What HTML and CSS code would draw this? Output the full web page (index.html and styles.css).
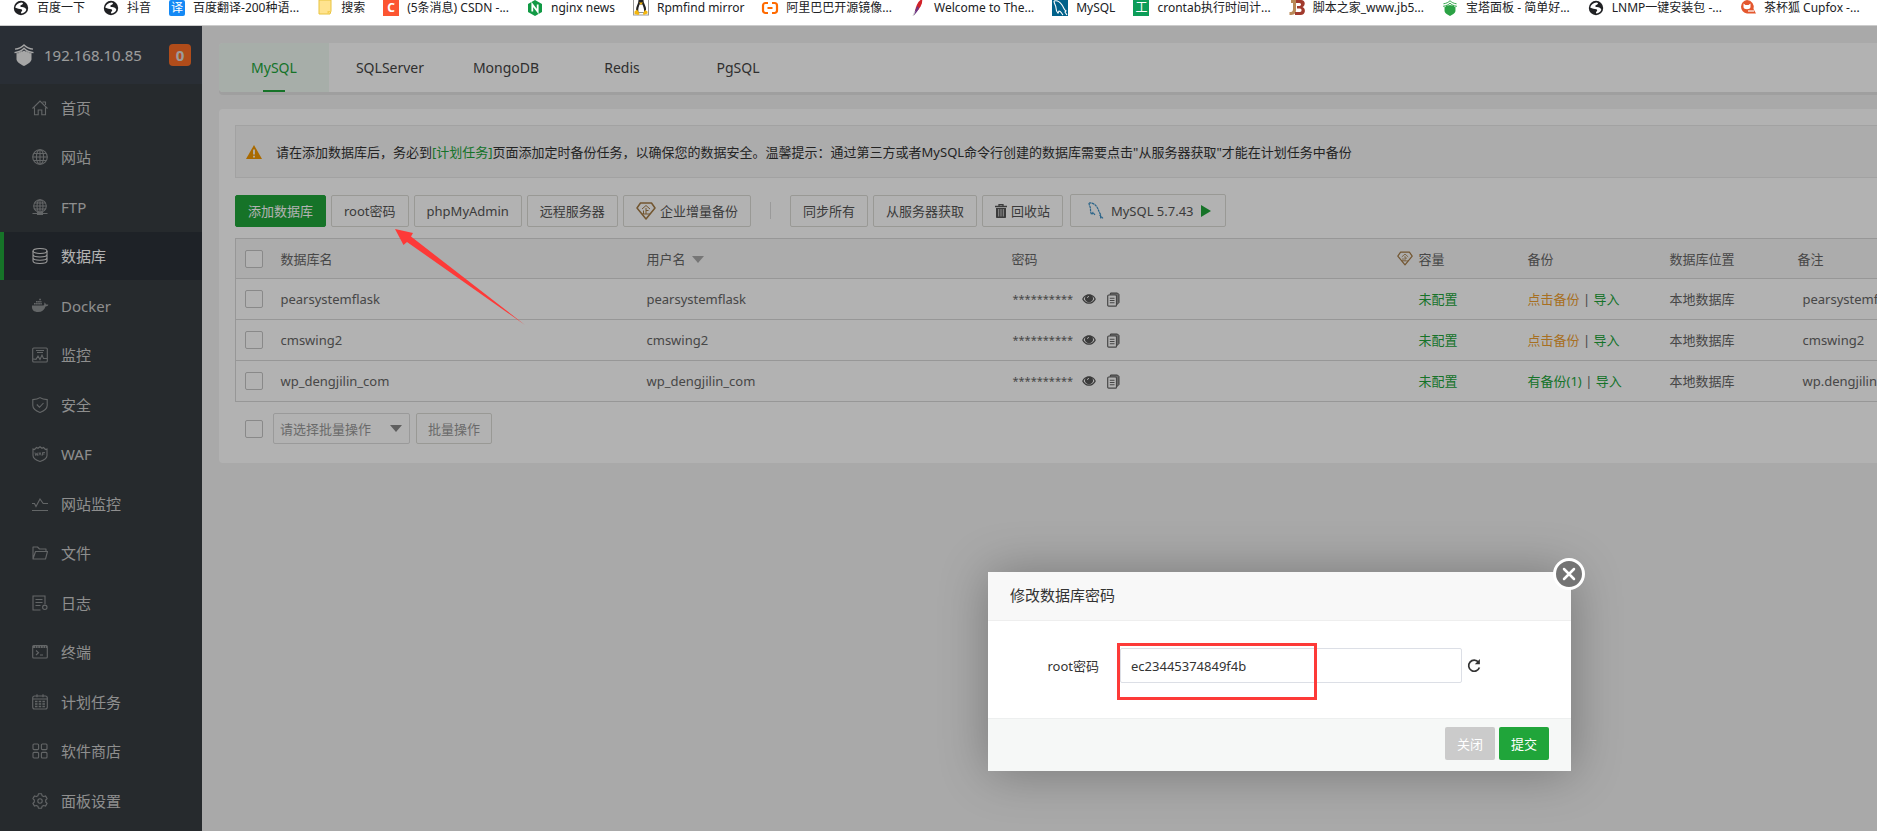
FILE: index.html
```html
<!DOCTYPE html>
<html lang="zh-CN">
<head>
<meta charset="utf-8">
<title>宝塔面板 - 数据库</title>
<link rel="stylesheet" href="styles.css">
</head>
<body>
<svg class="sprite" aria-hidden="true">
  <symbol id="globe-dark" viewBox="0 0 16 16"><circle cx="8" cy="8" r="7.200" fill="#202124"/><path d="M2.200 7.500C3 4.500 5.500 2.800 8.500 2.600c1.500.2 2 .9 1 1.700L7.500 5.500c-.8.8.2 1.500 1.500 1.600 2 .1 3.800 1 4.300 2.700-.7 2-2.600 3.500-4.600 3.700-1-.3-.9-1.300-.1-2 .8-.8.900-1.700-.2-2.200C6.500 8.600 4.500 9 2.200 7.500z" fill="#fff"/></symbol>
  <symbol id="gem" viewBox="0 0 20 18"><path d="M4.500 1h11L19 6l-9 11L1 6z" fill="none" stroke="#a47b45" stroke-width="1.500" stroke-linejoin="round"/><path d="M6 7l4-3.500L14 7M10 6v6M10 8.500h2.500M7.500 8.500V12M6 12h8" fill="none" stroke="#a47b45" stroke-width="1"/></symbol>
  <symbol id="eye" viewBox="0 0 16 12"><path d="M8 .5C4 .5 1.300 3.300.2 6c1.100 2.700 3.800 5.500 7.800 5.500s6.700-2.800 7.800-5.500C14.700 3.300 12 .5 8 .5z" fill="#555"/><path d="M4.200 2.800A6.500 6.500 0 0 0 1.800 6c1 2 3.200 4.200 6.200 4.200S13.200 8 14.200 6a6.500 6.500 0 0 0-2.400-3.200 4.500 4.500 0 1 1-7.600 0z" fill="#fff"/><circle cx="8" cy="5.200" r="3.700" fill="#555"/><path d="M6.200 4.800A1.900 1.900 0 0 1 8 3" fill="none" stroke="#fff" stroke-width="1"/></symbol>
  <symbol id="copy" viewBox="0 0 13 15"><path d="M3.500 1h7L12 2.500v8L9.500 13V3.500H3z" fill="#999" stroke="#555"/><rect x=".7" y="3" width="8.800" height="11.200" rx="1" fill="#fff" stroke="#666" stroke-width="1.200"/><path d="M2.800 6.200h4.700M2.800 8.500h4.700M2.800 10.800h4.700" stroke="#666" stroke-width="1.100"/></symbol>
  <symbol id="shield-tower" viewBox="0 0 20 22"><path d="M1 5.200C5 4.800 8 3 10 1c2 2 5 3.800 9 4.200M.5 8.700C5 8 8 6.500 10 4.300c2 2.200 5 3.700 9.500 4.400" fill="none" stroke="currentColor" stroke-width="1.300"/><path d="M2.500 9l2 .3V8l2 .3V7l2 .4L10 6.500l1.500.9 2-.4v1.300l2-.3v1.300l2-.3v6.500C17 18.500 13 20.500 10 22 7 20.500 3 18.500 2.500 15.500z" fill="currentColor"/></symbol>
</svg>

<nav class="bookmarks" aria-label="书签栏">
  <a href="#"><svg><use href="#globe-dark"/></svg>百度一下</a>
  <a href="#"><svg><use href="#globe-dark"/></svg>抖音</a>
  <a href="#"><span class="fav fav-yi">译</span>百度翻译-200种语...</a>
  <a href="#"><svg viewBox="0 0 16 16"><path d="M2 0h12v11l-1 3H2z" fill="#ffe38f" stroke="#e8c33f" stroke-width="1"/><path d="M10.500 14v-3H14" fill="#f6cf55"/></svg>搜索</a>
  <a href="#"><span class="fav fav-c">C</span>(5条消息) CSDN -...</a>
  <a href="#"><svg viewBox="0 0 16 16"><path d="M8 0l7 4v8l-7 4-7-4V4z" fill="#119a45"/><path d="M5.300 11.500v-7l5.400 7v-7" fill="none" stroke="#fff" stroke-width="1.800"/></svg>nginx news</a>
  <a href="#"><svg viewBox="0 0 16 16"><rect x=".5" y="-1" width="15" height="16" fill="#fff" stroke="#999"/><path d="M5.500 0h5c0 4 3 6 2.500 10l-2 3H5l-2-3C3 6 5.500 4 5.500 0z" fill="#222"/><path d="M6.500 4.500h3c.5 2 2 4 1.500 8H5.500c-.8-4 .5-6 1-8z" fill="#fff"/><path d="M6 2.500h4L8 5zM1.500 11.500l2.500-2 2.500 4-1 1.500-4-1zM14.500 11.500l-2.500-1.500-2 3.500.5 1.500 4-1.500z" fill="#f5b70d"/></svg>Rpmfind mirror</a>
  <a href="#"><svg viewBox="0 0 16 16"><path d="M6 3H3.500A2.500 2.500 0 0 0 1 5.500v5A2.500 2.500 0 0 0 3.500 13H6M10 3h2.500A2.500 2.500 0 0 1 15 5.500v5a2.500 2.500 0 0 1-2.500 2.500H10M5.500 8h5" fill="none" stroke="#ff6a00" stroke-width="2.200"/></svg>阿里巴巴开源镜像...</a>
  <a href="#"><svg viewBox="0 0 16 16"><path d="M12-1c1 3-1 9-6 13l-1-1C6 6 8 1 12-1z" fill="#d22128"/><path d="M7.500 6c-2 3-3 6-3.700 9.500C6 13 8 11 9 8z" fill="#6d3585"/><path d="M5 11l-2 5" stroke="#ccc"/></svg>Welcome to The...</a>
  <a href="#"><svg viewBox="0 0 16 16"><path d="M0-1h16v17H0z" fill="#00618a"/><path d="M2 1c3-1 6 1 8 4s2 5 4 6l-1 1 2 3M2 1c0 3 2 4 2 7s1 4 2 5l1-2c2 0 2 2 4 4" fill="none" stroke="#fff" stroke-width="1.100"/></svg>MySQL</a>
  <a href="#"><span class="fav fav-gong">工</span>crontab执行时间计...</a>
  <a href="#"><svg viewBox="0 0 16 16"><path d="M2 0h5v10c0 4-2 5-6.500 5v-3C3 12 4 11.500 4 9V3H2z" fill="#b98a58"/><path d="M7 0h5c5 0 4.500 6 1.500 7 3.500 1 3.500 8-2 8H6v-3h5c2 0 2-3.500 0-3.500H8V6h2.500c2 0 2-3 0-3H7z" fill="#a13a2d"/></svg>脚本之家_www.jb5...</a>
  <a href="#"><svg class="tower-green"><use href="#shield-tower"/></svg>宝塔面板 - 简单好...</a>
  <a href="#"><svg><use href="#globe-dark"/></svg>LNMP一键安装包 -...</a>
  <a href="#"><svg viewBox="0 0 16 16"><path d="M7 0a7 7 0 0 1 6.500 9l2.500 4.500H7A6.800 6.800 0 0 1 7 0z" fill="#e4572e"/><path d="M3.500 3.500l2 1.500h3l2-1.500v3.500c0 3-7 3-7 0z" fill="#fff"/><path d="M8 11h6" stroke="#fff" stroke-width="1.200"/></svg>茶杯狐 Cupfox -...</a>
</nav>

<div class="app">
  <aside class="sidebar">
    <div class="host"><svg><use href="#shield-tower"/></svg><span>192.168.10.85</span><b class="badge">0</b></div>
    <nav class="menu" aria-label="主菜单">
      <a href="#"><svg viewBox="0 0 16 16"><path d="M.5 8.500L8 1l7.500 7.500M2.500 7.500v7.300h3.700V10h3.600v4.800h3.700V7.500M10.500 2h3v3"/></svg>首页</a>
      <a href="#"><svg viewBox="0 0 16 16"><circle cx="8" cy="8" r="7.300"/><ellipse cx="8" cy="8" rx="3.600" ry="7.300"/><path d="M8 .7v14.600M.7 8h14.600M2 4.500h12M2 11.500h12"/></svg>网站</a>
      <a href="#"><svg viewBox="0 0 16 16"><circle cx="8" cy="7" r="6.300"/><ellipse cx="8" cy="7" rx="3" ry="6.300"/><path d="M8 .7v12.600M1.700 7h12.600M2.500 4h11M2.500 10h11M.5 14.500h15"/><path d="M5.500 13.500h5v2h-5z" fill="currentColor"/></svg>FTP</a>
      <a href="#" class="active" aria-current="page"><svg viewBox="0 0 16 16"><ellipse cx="8" cy="3" rx="7" ry="2.500"/><path d="M1 3v10c0 3.300 14 3.300 14 0V3M1 6.500c0 3.300 14 3.300 14 0M1 9.800c0 3.300 14 3.300 14 0"/></svg>数据库</a>
      <a href="#"><svg viewBox="0 0 16 16"><path d="M0 7.500h11.500c.8-.5 1-1.500.7-3 1.300.6 1.700 1.300 1.700 2 1-.2 2 0 2.500.3-.5 1.300-1.500 1.700-2.900 1.700C12.500 12 10 14 6 14 2 14-.5 12 0 7.500z" fill="currentColor" stroke="none"/><path d="M2 5.800h7.800M4 3.800h5.500M7.200 1.500h2" stroke-width="1.600" stroke-dasharray="1.700 .4"/></svg>Docker</a>
      <a href="#"><svg viewBox="0 0 16 16"><rect x=".7" y="1" width="14.600" height="14" rx="1"/><path d="M4 3.500h8M5 5.500h6M1 12l3 .3 2-3.300 2 3.500 2-4.500 1.500 3.500H15"/></svg>监控</a>
      <a href="#"><svg viewBox="0 0 16 16"><path d="M8 .6c2 1.400 4.500 1.900 7.200 2v6c0 3.500-3.500 5.500-7.200 6.900C4.300 14.100.8 12.100.8 8.600v-6C3.500 2.500 6 2 8 .6zM4.800 7.500l2.700 2.800L11.500 6"/></svg>安全</a>
      <a href="#"><svg viewBox="0 0 16 16"><path d="M1 9V3l1.500.5 2-2 1.500.8L8 .8l2 1.500 1.500-.8 2 2L15 3v6.500c0 3-4 5-7 6-3-1-7-3-7-6z"/><path d="M3 6.500l.7 3 .8-2 .8 2 .7-3M6.800 9.500L8 6.500l1.200 3M10.500 9.500v-3H13M10.500 8h2" stroke-width=".9"/></svg>WAF</a>
      <a href="#"><svg viewBox="0 0 16 16"><path d="M0 7.500h2.500l1.500 3L8 3l3.200 4.500H16M0 14.500h16"/></svg>网站监控</a>
      <a href="#"><svg viewBox="0 0 16 16"><path d="M1 14V2h4.500l2 2H14v2.500M1 14h12.500L15.500 6.500h-12z" stroke-linejoin="round"/></svg>文件</a>
      <a href="#"><svg viewBox="0 0 16 16"><path d="M8.500 15H1V1h12v8M3.500 4.500h7M3.500 7.500h7M3.500 10.500h5"/><circle cx="12.800" cy="12.300" r="2.200"/></svg>日志</a>
      <a href="#"><svg viewBox="0 0 16 16"><rect x=".7" y="1.500" width="14.600" height="12.500" rx="1"/><path d="M1 3h14" stroke-width="2" stroke-dasharray="2 .6"/><path d="M4 6.500l2.500 2.200L4 11M8 11h3"/></svg>终端</a>
      <a href="#"><svg viewBox="0 0 16 16"><rect x=".7" y="2" width="14.600" height="13" rx="2"/><path d="M1 5h14M5 .3v3M11 .3v3"/><path d="M3 7.500h10M3 10h10M3 12.500h10" stroke-width="1.500" stroke-dasharray="2.500 1.200"/></svg>计划任务</a>
      <a href="#"><svg viewBox="0 0 16 16"><rect x="1" y="1" width="5.600" height="5.600" rx="1"/><rect x="9.400" y="1" width="5.600" height="5.600" rx="1"/><rect x="1" y="9.400" width="5.600" height="5.600" rx="1"/><rect x="9.400" y="9.400" width="5.600" height="5.600" rx="1"/></svg>软件商店</a>
      <a href="#"><svg viewBox="0 0 16 16"><path d="M6.400 .8h3.200l.5 2 1.500.8 1.900-.7 1.600 2.700-1.400 1.400v2l1.400 1.400-1.600 2.700-1.900-.7-1.500.8-.5 2H6.400l-.5-2-1.500-.8-1.900.7L.9 10.400 2.300 9V7L.9 5.600l1.600-2.700 1.900.7 1.500-.8z" stroke-linejoin="round"/><circle cx="8" cy="8" r="2.200"/></svg>面板设置</a>
    </nav>
  </aside>

  <main class="content">
    <nav class="tabs" aria-label="数据库类型">
      <a href="#" class="active">MySQL</a><a href="#">SQLServer</a><a href="#">MongoDB</a><a href="#">Redis</a><a href="#">PgSQL</a>
    </nav>

    <section class="card">
      <div class="alert">
        <svg viewBox="0 0 16 14"><path d="M8 0l8 14H0z" fill="#f39800"/><path d="M8 4.500v5M8 10.700v1.800" stroke="#fff" stroke-width="1.800"/></svg>
        <p>请在添加数据库后，务必到<a href="#">[计划任务]</a>页面添加定时备份任务，以确保您的数据安全。温馨提示：通过第三方或者MySQL命令行创建的数据库需要点击"从服务器获取"才能在计划任务中备份</p>
      </div>

      <div class="toolbar">
        <button class="btn primary">添加数据库</button>
        <button class="btn">root密码</button>
        <button class="btn">phpMyAdmin</button>
        <button class="btn">远程服务器</button>
        <button class="btn"><svg class="gem-lg"><use href="#gem"/></svg>企业增量备份</button>
        <span class="divider"></span>
        <button class="btn">同步所有</button>
        <button class="btn">从服务器获取</button>
        <button class="btn"><svg class="trash" viewBox="0 0 12 14"><path d="M0 2.500h12M4 2V.700h4V2" fill="none" stroke="#555" stroke-width="1.300"/><path d="M1 4h10v9.200a.8.8 0 0 1-.8.800H1.800a.8.800 0 0 1-.8-.800z" fill="#555"/><path d="M3.700 5v7.500M6 5v7.500M8.300 5v7.500" stroke="#ddd" stroke-width=".9"/></svg>回收站</button>
        <button class="btn version"><svg class="dolphin" viewBox="0 0 16 18"><path d="M1 1c4-.5 7 2 8.500 5s2 5.500 3.500 6.500l-1 .8 3 3M1 1c0 2.500 1.500 3.500 1.500 6s.2 4 1.200 5.500L5 10.500l2 2.500M12.500 13.500l.3 3.500" fill="none" stroke="#3c8fc4" stroke-width="1.200" stroke-dasharray="2.500 .5"/></svg>MySQL 5.7.43<svg class="play" viewBox="0 0 10 12"><path d="M0 0l10 6-10 6z" fill="#20a53a"/></svg></button>
      </div>

      <table class="grid">
        <colgroup><col class="c-check"><col class="c-name"><col class="c-user"><col class="c-pass"><col class="c-quota"><col class="c-backup"><col class="c-place"><col class="c-note"></colgroup>
        <thead>
          <tr><th><input type="checkbox" aria-label="全选"></th><th>数据库名</th><th>用户名<svg class="sort" viewBox="0 0 12 7"><path d="M0 0h12L6 7z" fill="#aaa"/></svg></th><th>密码</th><th><svg class="gem-sm"><use href="#gem"/></svg>容量</th><th>备份</th><th>数据库位置</th><th>备注</th></tr>
        </thead>
        <tbody>
          <tr><td><input type="checkbox" aria-label="pearsystemflask"></td><td>pearsystemflask</td><td>pearsystemflask</td><td><div class="secret"><span>**********</span><svg class="i-eye"><use href="#eye"/></svg><svg class="i-copy"><use href="#copy"/></svg></div></td><td class="quota"><a href="#">未配置</a></td><td><a href="#" class="warn">点击备份</a> | <a href="#">导入</a></td><td>本地数据库</td><td class="note">pearsystemflask</td></tr>
          <tr><td><input type="checkbox" aria-label="cmswing2"></td><td>cmswing2</td><td>cmswing2</td><td><div class="secret"><span>**********</span><svg class="i-eye"><use href="#eye"/></svg><svg class="i-copy"><use href="#copy"/></svg></div></td><td class="quota"><a href="#">未配置</a></td><td><a href="#" class="warn">点击备份</a> | <a href="#">导入</a></td><td>本地数据库</td><td class="note">cmswing2</td></tr>
          <tr><td><input type="checkbox" aria-label="wp_dengjilin_com"></td><td>wp_dengjilin_com</td><td>wp_dengjilin_com</td><td><div class="secret"><span>**********</span><svg class="i-eye"><use href="#eye"/></svg><svg class="i-copy"><use href="#copy"/></svg></div></td><td class="quota"><a href="#">未配置</a></td><td><a href="#">有备份(1)</a> | <a href="#">导入</a></td><td>本地数据库</td><td class="note">wp.dengjilin.com</td></tr>
        </tbody>
      </table>

      <div class="batch">
        <input type="checkbox" aria-label="选择全部">
        <div class="select"><select aria-label="批量操作类型"><option>请选择批量操作</option></select><svg viewBox="0 0 12 7"><path d="M0 0h12L6 7z" fill="#888"/></svg></div>
        <button class="btn muted">批量操作</button>
      </div>
    </section>
  </main>
  <div class="shade"></div>
</div>

<div class="dialog" role="dialog" aria-labelledby="dlg-title">
  <h2 id="dlg-title">修改数据库密码</h2>
  <div class="dialog-body">
    <label for="root-pass">root密码</label>
    <input id="root-pass" type="text" value="ec23445374849f4b">
    <button class="refresh" aria-label="随机密码"><svg viewBox="0 0 14 14"><path d="M11.500 3.300A5.500 5.500 0 1 0 12.400 8.500" fill="none" stroke="#333" stroke-width="1.700"/><path d="M12.900 0v5.300H7.800z" fill="#333"/></svg></button>
    <span class="mark-box"></span>
  </div>
  <div class="dialog-foot"><button class="close">关闭</button><button class="submit">提交</button></div>
  <button class="dismiss" aria-label="关闭"><svg viewBox="0 0 32 32"><circle cx="16" cy="16" r="14.500" fill="#747474" stroke="#fff" stroke-width="3"/><path d="M11 11l10 10M21 11L11 21" stroke="#fff" stroke-width="2.500" stroke-linecap="round"/></svg></button>
</div>

<svg class="mark-arrow" viewBox="0 0 130 96" aria-hidden="true"><path d="M0 0l18 4-2 3.500L130 96 12 13l-3.500 3z" fill="#fd3a38"/></svg>
</body>
</html>
```
FILE: styles.css
```css
* { box-sizing: border-box; }

html, body { height: 100%; }

body {
  margin: 0;
  display: flex;
  flex-direction: column;
  position: relative;
  overflow: hidden;
  font-family: "Noto Sans", "Noto Sans CJK SC", sans-serif;
  font-size: 13px;
  line-height: 20px;
  color: #666;
  background: #fff;
}

a { color: #20a53a; text-decoration: none; }
button, input, select { font: inherit; color: inherit; margin: 0; }
button { cursor: pointer; }
svg { display: block; flex: none; }
.sprite { position: absolute; width: 0; height: 0; }

/* Bookmarks bar */
.bookmarks {
  flex: none;
  display: flex;
  gap: 18px;
  height: 26px;
  padding: 0 13px;
  border-bottom: 1px solid #ccc;
  font-size: 12px;
  line-height: 16px;
}
.bookmarks a {
  display: flex;
  gap: 8px;
  height: 16px;
  align-items: center;
  color: #202124;
  white-space: nowrap;
}
.bookmarks svg { width: 16px; height: 16px; overflow: visible; }
.bookmarks .tower-green { color: #2ba245; }
.bookmarks .tower-green use { width: 16px; height: 16px; }
.fav {
  width: 16px;
  height: 16px;
  font-size: 12px;
  line-height: 16px;
  text-align: center;
  color: #fff;
  border-radius: 2px;
}
.fav-yi { background: #1489f5; }
.fav-c { background: #fc5531; font-weight: 700; border-radius: 0; }
.fav-gong { background: #0c9d58; border-radius: 0; }

/* Application frame */
.app {
  flex: 1;
  min-height: 0;
  display: flex;
  position: relative;
  background: #f2f2f2;
}
.shade { position: absolute; inset: 0; background: rgba(0, 0, 0, .3); }

.sidebar {
  flex: none;
  width: 202px;
  display: flex;
  flex-direction: column;
  background: #373d41;
  color: #e0e0e0;
}
.host {
  display: flex;
  align-items: center;
  height: 58px;
  padding: 0 11px 0 14px;
  background: #3c434d;
  font-size: 15px;
}
.host svg { width: 20px; height: 22px; margin-right: 10px; color: #eee; }
.host .badge {
  width: 22px;
  height: 22px;
  margin-left: auto;
  border-radius: 4px;
  background: #fc6d26;
  text-align: center;
  line-height: 22px;
}
.menu {
  flex: 1;
  min-height: 0;
  display: grid;
  grid-auto-rows: 1fr;
  padding-bottom: 5px;
}
.menu a {
  display: flex;
  align-items: center;
  gap: 13px;
  height: 48px;
  padding-left: 28px;
  border-left: 4px solid transparent;
  color: #ccc;
  font-size: 15px;
}
.menu svg {
  width: 16px;
  height: 16px;
  overflow: visible;
  fill: none;
  stroke: currentColor;
  stroke-width: 1.1;
  color: #8f9294;
}
.menu .active { background: #2c3138; border-color: #20a53a; color: #fff; }
.menu .active svg { color: #ddd; }

.content {
  flex: 1;
  min-width: 0;
  padding: 17px 0 0 17px;
  overflow: hidden;
}
.tabs {
  display: flex;
  gap: 6px;
  height: 49px;
  background: #fff;
  border-radius: 4px 0 0 4px;
  box-shadow: 0 3px 0 #e4e4e4;
}
.tabs a {
  width: 110px;
  display: flex;
  align-items: center;
  justify-content: center;
  font-size: 14px;
  color: #444;
  position: relative;
}
.tabs .active { background: #f0f9f2; color: #20a53a; border-radius: 4px 0 0 4px; }
.tabs .active::after {
  content: "";
  position: absolute;
  left: 44px;
  right: 44px;
  bottom: 0;
  height: 2px;
  background: #20a53a;
}

.card {
  margin-top: 17px;
  padding: 16px 0 19px 16px;
  background: #fff;
  border-radius: 4px 0 0 4px;
}
.alert {
  display: flex;
  align-items: center;
  gap: 14px;
  height: 53px;
  padding-left: 10px;
  border: 1px solid #e8e8e8;
  border-right: 0;
  background: #f7f7f7;
  color: #333;
}
.alert svg { width: 16px; height: 14px; }
.alert p { margin: 0; white-space: nowrap; }

.toolbar { display: flex; align-items: flex-end; gap: 5px; margin-top: 16px; }
.btn {
  display: flex;
  align-items: center;
  gap: 4px;
  height: 32px;
  padding: 0 12px;
  border: 1px solid #dcdcd6;
  border-radius: 2px;
  background: #fff;
  color: #555;
  white-space: nowrap;
}
.btn.primary { background: #20a53a; border-color: #20a53a; color: #fff; }
.btn.version { height: 33px; margin-left: 2px; padding: 0 14px 0 17px; }
.btn.muted { height: 31px; padding: 0 11px; color: #999; }
.gem-lg { width: 20px; height: 18px; }
.trash { width: 12px; height: 14px; }
.dolphin { width: 16px; height: 18px; margin-right: 3px; }
.play { width: 10px; height: 12px; margin-left: 3px; }
.divider {
  align-self: center;
  width: 1px;
  height: 17px;
  margin: 0 14px;
  background: #ddd;
}

input[type="checkbox"] {
  appearance: none;
  display: block;
  width: 18px;
  height: 18px;
  border: 1px solid #c4c4c4;
  border-radius: 2px;
  background: #fff;
}

.grid {
  margin-top: 11px;
  width: 1860px;
  table-layout: fixed;
  border-collapse: collapse;
  border: 1px solid #d8d8d8;
}
.grid th, .grid td {
  height: 41px;
  padding: 0 8px;
  border-bottom: 1px solid #d8d8d8;
  text-align: left;
  font-weight: 400;
  white-space: nowrap;
}
.grid th { height: 40px; background: #f6f6f6; }
.grid th:first-child, .grid td:first-child { padding: 0 9px; }
.grid th svg { display: inline-block; }
.c-check { width: 37px; }
.c-name { width: 366px; }
.c-user { width: 365px; }
.c-pass { width: 385px; }
.c-quota { width: 131px; }
.c-backup { width: 142px; }
.c-place { width: 128px; }
.grid .quota { padding-left: 30px; }
.grid .note { padding-left: 13px; }
.grid .warn { color: #f0a030; }
.sort { width: 12px; height: 7px; margin-left: 6px; vertical-align: 1px; }
.gem-sm { width: 16px; height: 15px; margin-right: 6px; vertical-align: -2px; }
.secret { display: flex; align-items: center; padding-left: 1px; }
.secret span { width: 69px; font-size: 11px; }
.i-eye { width: 14px; height: 12px; margin-right: 11px; }
.i-copy { width: 13px; height: 15px; }

.batch { display: flex; align-items: center; margin-top: 11px; padding-left: 10px; }
.select { position: relative; margin: 0 6px 0 10px; }
.select select {
  appearance: none;
  display: block;
  width: 137px;
  height: 31px;
  padding: 0 6px;
  border: 1px solid #ddd;
  border-radius: 2px;
  background: #fff;
  color: #999;
}
.select svg { position: absolute; right: 8px; top: 12px; width: 12px; height: 7px; pointer-events: none; }

/* Password dialog, floating over the shaded page */
.dialog {
  position: absolute;
  left: 988px;
  top: 572px;
  width: 583px;
  background: #fff;
  border-radius: 2px;
  box-shadow: 1px 1px 50px rgba(0, 0, 0, .3);
  color: #333;
}
.dialog h2 {
  height: 49px;
  margin: 0;
  padding-left: 22px;
  border-bottom: 1px solid #eee;
  background: #f8f8f8;
  font-size: 15px;
  font-weight: 400;
  line-height: 46px;
}
.dialog-body {
  position: relative;
  display: flex;
  align-items: center;
  height: 97px;
  padding: 0 0 8px;
}
.dialog-body label { width: 111px; margin-right: 21px; text-align: right; }
.dialog-body input {
  width: 342px;
  height: 35px;
  padding: 0 10px;
  border: 1px solid #dcdfe6;
  border-radius: 2px;
  background: #fff;
}
.refresh { margin-left: 5px; padding: 0; border: 0; background: none; }
.refresh svg { width: 14px; height: 14px; }
.dialog-foot {
  display: flex;
  justify-content: flex-end;
  gap: 4px;
  height: 53px;
  padding: 8px 22px 0 0;
  border-top: 1px solid #edefef;
  background: #f6f8f7;
}
.dialog-foot button {
  height: 33px;
  padding: 0 12px;
  border: 0;
  border-radius: 2px;
  color: #fff;
}
.close { background: #cbcbcb; }
.submit { background: #20a53a; }
.dismiss {
  position: absolute;
  right: -14px;
  top: -14px;
  padding: 0;
  border: 0;
  background: none;
}
.dismiss svg { width: 32px; height: 32px; }

/* Highlight marks */
.mark-box {
  position: absolute;
  left: 129px;
  top: 22px;
  width: 200px;
  height: 57px;
  border: 3px solid #fd3a38;
  pointer-events: none;
}
.mark-arrow { position: absolute; left: 395px; top: 229px; width: 130px; height: 96px; }
```
